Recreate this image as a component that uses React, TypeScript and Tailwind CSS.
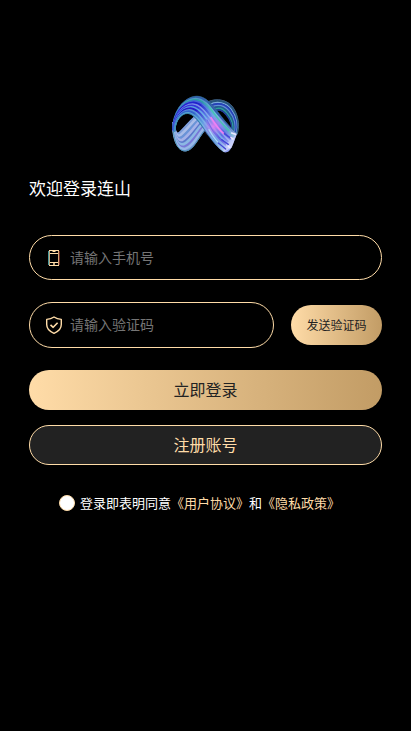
import { useState } from 'react'

type Edge = number[]

interface Strand {
  at: number
  color: string
  width: number
}

interface RibbonProps {
  from: Edge
  to: Edge
  base: string
  strands: Strand[]
}

// Each edge holds a start point followed by two cubic segments
const backLeft = {
  from: [37, 112, 42, 136, 46, 150, 56, 139, 76, 118, 88, 104, 104, 90],
  to: [36, 112, 36, 160, 46, 202, 76, 199, 98, 196, 112, 160, 134, 134],
}
const backRight = {
  from: [142, 49, 168, 38, 200, 44, 216, 66, 230, 86, 238, 116, 229, 148],
  to: [156, 84, 172, 70, 184, 78, 194, 90, 208, 106, 214, 122, 210, 142],
}
const front = {
  from: [36, 134, 34, 84, 66, 34, 108, 33, 150, 34, 166, 86, 228, 146],
  to: [41, 140, 42, 108, 60, 86, 80, 86, 112, 88, 136, 162, 188, 201],
}

const backLeftStrands: Strand[] = [
  { at: 0.05, color: '#7fa0dc', width: 4 },
  { at: 0.17, color: '#a9bde8', width: 8 },
  { at: 0.3, color: '#6a94d8', width: 6 },
  { at: 0.42, color: '#a5b2e8', width: 8 },
  { at: 0.53, color: '#5b78cc', width: 4 },
  { at: 0.64, color: '#8cb8e4', width: 8 },
  { at: 0.75, color: '#7a76d8', width: 5 },
  { at: 0.87, color: '#98b8e8', width: 7 },
  { at: 0.98, color: '#4a91b4', width: 3 },
]

const backRightStrands: Strand[] = [
  { at: 0.02, color: '#42647c', width: 3 },
  { at: 0.14, color: '#28577b', width: 5 },
  { at: 0.27, color: '#7aa9dc', width: 4 },
  { at: 0.4, color: '#2540b8', width: 6 },
  { at: 0.54, color: '#628ed5', width: 5 },
  { at: 0.66, color: '#245c92', width: 5 },
  { at: 0.8, color: '#2c9f9b', width: 4 },
  { at: 0.94, color: '#24449b', width: 4 },
]

const frontStrands: Strand[] = [
  { at: 0.01, color: '#2b6b78', width: 2 },
  { at: 0.07, color: '#315fa8', width: 5 },
  { at: 0.14, color: '#4f9cc4', width: 4 },
  { at: 0.21, color: '#28a8a0', width: 4 },
  { at: 0.29, color: '#4266d6', width: 6 },
  { at: 0.38, color: '#2320cc', width: 7 },
  { at: 0.46, color: '#7b8be8', width: 5 },
  { at: 0.54, color: '#3434da', width: 6 },
  { at: 0.62, color: '#5aa0e2', width: 6 },
  { at: 0.7, color: '#251bc5', width: 7 },
  { at: 0.79, color: '#5a92dc', width: 6 },
  { at: 0.87, color: '#3266cb', width: 6 },
  { at: 0.94, color: '#5aa8d0', width: 4 },
  { at: 0.99, color: '#2c8a9c', width: 2 },
]

function curve(p: Edge) {
  return `${p[0]} ${p[1]}C${p.slice(2).join(' ')}`
}

function reversed(p: Edge) {
  return p.map((_, i) => p[p.length - 2 - i + 2 * (i % 2)])
}

function Ribbon({ from, to, base, strands }: RibbonProps) {
  return (
    <g fill="none">
      <path d={`M${curve(from)}L${curve(reversed(to))}Z`} fill={base} />
      {strands.map(({ at, color, width }) => (
        <path
          key={at}
          d={`M${curve(from.map((v, i) => v + (to[i] - v) * at))}`}
          stroke={color}
          strokeWidth={width}
        />
      ))}
    </g>
  )
}

function Logo() {
  return (
    <svg viewBox="33 30 204 180" className="h-[60px] w-[68px]" role="img" aria-label="连山">
      <defs>
        <radialGradient id="pink" gradientUnits="userSpaceOnUse" cx="158" cy="124" r="36">
          <stop offset="0" stopColor="#f578f5" stopOpacity="0.85" />
          <stop offset="0.5" stopColor="#c77bf3" stopOpacity="0.45" />
          <stop offset="1" stopColor="#a08cf0" stopOpacity="0" />
        </radialGradient>
        <linearGradient id="shine" gradientUnits="userSpaceOnUse" x1="100" y1="70" x2="208" y2="180">
          <stop offset="0" stopColor="#8ccdf5" stopOpacity="0" />
          <stop offset="0.35" stopColor="#8ccdf5" stopOpacity="0.6" />
          <stop offset="0.75" stopColor="#9db8f8" stopOpacity="0.4" />
          <stop offset="1" stopColor="#e4e6ff" stopOpacity="0.7" />
        </linearGradient>
        <filter id="soft">
          <feGaussianBlur stdDeviation="1.2" />
        </filter>
      </defs>
      <g filter="url(#soft)">
        <Ribbon {...backRight} base="#1e3f86" strands={backRightStrands} />
        <Ribbon {...backLeft} base="#7896d4" strands={backLeftStrands} />
        <Ribbon {...front} base="#3f62cc" strands={frontStrands} />
        <path d="M228 146C220 166 212 192 204 198C198 203 192 203 188 201L196 176Z" fill="#8f9ff0" />
        <path d="M100 90L132 42C156 76 180 106 228 146L212 188L188 201C148 174 134 124 100 90Z" fill="url(#shine)" />
        <circle cx="158" cy="124" r="36" fill="url(#pink)" />
        <g fill="none" strokeLinecap="round">
          <path d="M146 66C162 92 178 112 204 136" stroke="#43c5b1" strokeWidth="4" />
          <path d="M150 98C164 120 174 134 188 146" stroke="#f07ff2" strokeWidth="5" />
          <path d="M138 104C150 130 162 152 184 170" stroke="#6f6de8" strokeWidth="3" />
          <path d="M144 134C156 156 170 174 188 188" stroke="#a9d9f7" strokeWidth="4" />
          <path d="M190 146L210 160M182 164L202 178M172 174L194 192" stroke="#4446d8" strokeWidth="4" />
          <path d="M212 144L223 148M210 158L216 162M202 184L206 187" stroke="#eceaff" strokeWidth="5" />
        </g>
      </g>
    </svg>
  )
}

function PhoneIcon() {
  return (
    <svg viewBox="0 0 18 18" className="size-[18px] shrink-0" fill="none" aria-hidden="true">
      <path d="M4 1.5h10M4 16.5h10M4 4.5h10M4 13.5h10" stroke="#ffdca8" />
      <path d="M3.5 2v14" stroke="#4d9a9b" />
      <path d="M4.5 2v14" stroke="#bfa681" />
      <path d="M13.5 2v14" stroke="#d6a779" />
      <path d="M14.5 2v14" stroke="#702c20" />
      <path d="M7.5 2.5h3" stroke="#ffdca8" />
      <circle cx="9" cy="15" r="1" fill="#ffdca8" />
    </svg>
  )
}

function ShieldIcon() {
  return (
    <svg viewBox="0 0 18 18" className="size-[18px] shrink-0" fill="none" stroke="#ffdca8" strokeLinejoin="round" aria-hidden="true">
      <path d="M9 1C11 2.5 13.5 3.3 16.3 3.4V8.5C16.3 12.5 13 15.7 9 17.3C5 15.7 1.7 12.5 1.7 8.5V3.4C4.5 3.3 7 2.5 9 1Z" strokeWidth="1.4" />
      <path d="M5.5 8.8L8.2 11.3L12.6 6.8" strokeWidth="1.6" />
    </svg>
  )
}

export default function App() {
  const [phone, setPhone] = useState('')
  const [code, setCode] = useState('')
  const [agreed, setAgreed] = useState(false)

  return (
    <main className="min-h-screen bg-black px-[29px] pt-[95px] font-['Noto_Sans_CJK_SC',sans-serif] text-white">
      <div className="flex justify-center">
        <Logo />
      </div>
      <h1 className="mt-[21px] text-[17px] leading-6">欢迎登录连山</h1>

      <form onSubmit={(e) => e.preventDefault()} className="mt-[35px]">
        <label className="flex h-[45px] items-center gap-[7px] rounded-full border border-[#ffdca8] px-[15px]">
          <PhoneIcon />
          <input
            type="tel"
            aria-label="手机号"
            placeholder="请输入手机号"
            value={phone}
            onChange={(e) => setPhone(e.target.value)}
            className="min-w-0 flex-1 bg-transparent pb-0.5 text-sm outline-none placeholder:text-[#757575]"
          />
        </label>

        <div className="mt-[22px] flex items-center gap-[17px]">
          <label className="flex h-[46px] min-w-0 flex-1 items-center gap-[7px] rounded-full border border-[#ffdca8] px-[15px]">
            <ShieldIcon />
            <input
              type="text"
              aria-label="验证码"
              placeholder="请输入验证码"
              value={code}
              onChange={(e) => setCode(e.target.value)}
              className="min-w-0 flex-1 bg-transparent pb-0.5 text-sm outline-none placeholder:text-[#757575]"
            />
          </label>
          <button
            type="button"
            className="h-10 w-[91px] shrink-0 rounded-full bg-linear-to-r from-[#ffdca8] to-[#c29c65] text-xs text-[#222222]"
          >
            发送验证码
          </button>
        </div>

        <button
          type="submit"
          className="mt-[22px] block h-10 w-full rounded-full bg-linear-to-r from-[#ffdca8] to-[#c29c65] pb-0.5 text-base text-[#222222]"
        >
          立即登录
        </button>
        <button
          type="button"
          className="mt-[15px] block h-10 w-full rounded-full border border-[#ffdca8] bg-[#222222] pb-0.5 text-base text-[#ffdca8]"
        >
          注册账号
        </button>

        <div className="mt-7 ml-[30px] flex items-center gap-[5px] text-[13px] leading-5">
          <input
            id="agree"
            type="checkbox"
            checked={agreed}
            onChange={(e) => setAgreed(e.target.checked)}
            className="size-4 shrink-0 appearance-none rounded-full border border-[#ffdca8] bg-white checked:bg-[#ffdca8]"
          />
          <p>
            <label htmlFor="agree">登录即表明同意</label>
            <a href="#agreement" className="text-[#ffdca8]">《用户协议》</a>
            和
            <a href="#privacy" className="text-[#ffdca8]">《隐私政策》</a>
          </p>
        </div>
      </form>
    </main>
  )
}
